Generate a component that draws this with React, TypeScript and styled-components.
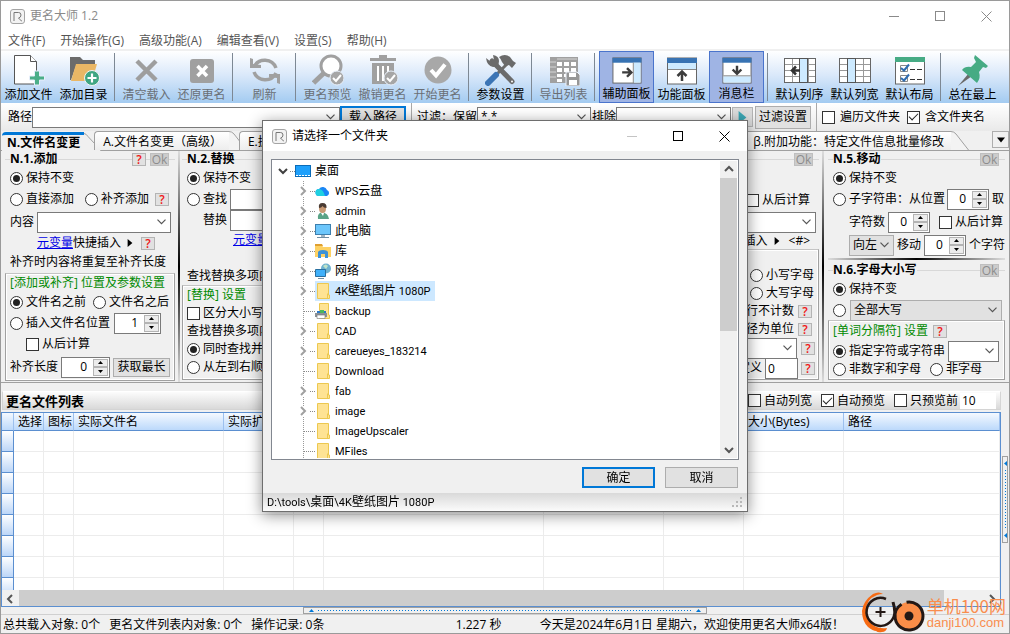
import React from "react";
import styled, { createGlobalStyle, css } from "styled-components";

const Global = createGlobalStyle`
  *, *::before, *::after { box-sizing: border-box; }
  body { margin: 0; background: #f0f0f0; }
  body, button, input, select {
    font-family: "Open Sans", "Noto Sans CJK SC", sans-serif;
    font-size: 12px;
    line-height: 16px;
    color: #000;
  }
  button, input, select { margin: 0; padding: 0; border-radius: 0; outline: none; }
`;

/* ---------- window frame ---------- */

const Window = styled.div`
  position: relative;
  display: flex;
  flex-direction: column;
  height: 100vh;
  min-height: 560px;
  overflow: hidden;
  white-space: nowrap;
  border: 1px solid #9a9a9a;
  background: #f0f0f0;
`;

const TitleBar = styled.header<{ $active?: boolean }>`
  display: flex;
  align-items: center;
  flex: none;
  height: 30px;
  padding-left: 9px;
  background: #fff;
  color: ${(p) => (p.$active ? "#000" : "#8a8a8a")};
`;

const Caption = styled.span`
  flex: 1;
  padding-left: 5px;
`;

const CaptionButton = styled.button<{ $dim?: boolean }>`
  display: grid;
  place-items: center;
  width: 46px;
  height: 28px;
  border: 0;
  background: none;
  color: ${(p) => (p.$dim ? "#c4c4c4" : "inherit")};
`;

const MenuBar = styled.nav`
  display: flex;
  align-items: center;
  gap: 15px;
  flex: none;
  height: 20px;
  padding: 2px 0 0 7px;
  background: #fff;
  border-bottom: 2px solid #f0f0f0;
`;

const MenuItem = styled.button`
  border: 0;
  background: none;
  color: #555;
`;

const ToolBar = styled.div`
  display: flex;
  flex: none;
  height: 52px;
  background: linear-gradient(#fff, #dbe9fa 45%, #a3cbf1);
`;

const ToolButton = styled.button<{ $on?: boolean }>`
  display: flex;
  flex-direction: column;
  align-items: center;
  flex: none;
  width: 55px;
  padding-top: ${(p) => (p.$on ? 2 : 3)}px;
  border: 0;
  background: none;
  ${(p) =>
    p.$on &&
    css`
      border: 1px solid #4a74cc;
      background: #9fb4e4;
    `}
  &:disabled {
    color: #6a6f76;
  }
  span {
    padding-top: 1px;
  }
`;

const ToolSeparator = styled.div`
  flex: none;
  width: 1px;
  margin: 2px 4px 2px 3px;
  background: #7d8894;
`;

/* ---------- small controls ---------- */

const Check = styled.input.attrs({ type: "checkbox" })`
  appearance: none;
  display: grid;
  place-items: center;
  flex: none;
  width: 13px;
  height: 13px;
  border: 1px solid #333;
  background: #fff;
  &:checked::after {
    content: "";
    width: 9px;
    height: 5px;
    margin-bottom: 3px;
    border: solid #222;
    border-width: 0 0 1px 1px;
    transform: rotate(-45deg);
  }
`;

const Radio = styled.input.attrs({ type: "radio" })`
  appearance: none;
  display: grid;
  place-items: center;
  flex: none;
  width: 13px;
  height: 13px;
  border: 1px solid #333;
  border-radius: 50%;
  background: #fff;
  &:checked::after {
    content: "";
    width: 7px;
    height: 7px;
    border-radius: 50%;
    background: #222;
  }
`;

const Option = styled.label<{ $ml?: number; $gap?: number }>`
  display: flex;
  align-items: center;
  gap: ${(p) => p.$gap ?? 3}px;
  margin-left: ${(p) => p.$ml ?? 0}px;
`;

const Field = styled.label<{ $ml?: number }>`
  display: flex;
  align-items: center;
  gap: 3px;
  margin-left: ${(p) => p.$ml ?? 0}px;
`;

const TextBox = styled.input<{ $w?: number; $plain?: boolean }>`
  ${(p) => (p.$w ? `width: ${p.$w}px;` : "flex: 1; min-width: 0;")}
  height: ${(p) => (p.$plain ? 16 : 21)}px;
  padding: 0 2px;
  border: ${(p) => (p.$plain ? 0 : "1px solid #7a7a7a")};
  background: #fff;
`;

const ComboFrame = styled.span<{ $w?: number; $grey?: boolean }>`
  position: relative;
  display: flex;
  align-items: center;
  ${(p) => (p.$w ? `width: ${p.$w}px;` : "flex: 1; min-width: 0;")}
  height: 21px;
  border: 1px solid ${(p) => (p.$grey ? "#adadad" : "#7a7a7a")};
  background: ${(p) => (p.$grey ? "#e1e1e1" : "#fff")};
  select {
    appearance: none;
    width: 100%;
    height: 19px;
    padding-left: 3px;
    border: 0;
    background: none;
  }
  svg {
    position: absolute;
    right: 4px;
    pointer-events: none;
  }
`;

const SpinFrame = styled.span<{ $w: number }>`
  display: flex;
  width: ${(p) => p.$w}px;
  height: 21px;
  padding: 1px;
  border: 1px solid #7a7a7a;
  background: #fff;
  input {
    flex: 1;
    min-width: 0;
    padding-right: 6px;
    border: 0;
    background: none;
    text-align: right;
  }
`;

const SpinButtons = styled.span`
  display: flex;
  flex-direction: column;
  width: 15px;
  button {
    display: grid;
    place-items: center;
    flex: 1;
    min-height: 0;
    border: 1px solid #b4b4b4;
    background: #ececec;
  }
`;

const Button = styled.button<{ $w: number; $primary?: boolean; $h?: number }>`
  flex: none;
  width: ${(p) => p.$w}px;
  height: ${(p) => p.$h ?? 21}px;
  border: ${(p) => (p.$primary ? "2px solid #0078d7" : "1px solid #adadad")};
  background: #e1e1e1;
`;

const HelpButton = styled.button<{ $ml?: number }>`
  flex: none;
  width: 14px;
  height: 13px;
  margin-left: ${(p) => p.$ml ?? 0}px;
  border: 1px solid #b4b4b4;
  background: #e1e1e1;
  color: #f01818;
  font-weight: 600;
  line-height: 11px;
`;

const OkButton = styled.button`
  flex: none;
  width: 19px;
  height: 13px;
  border: 1px solid #bfbfbf;
  background: #ccc;
  color: #8c8c8c !important;
  line-height: 11px;
`;

const VarLink = styled.a`
  color: #0000e6;
`;

/* ---------- path / filter row ---------- */

const PathBar = styled.div`
  display: flex;
  align-items: center;
  flex: none;
  height: 28px;
  padding: 0 24px 0 7px;
  background: linear-gradient(#fff, #e9e9e9);
`;

const PathField = styled.label`
  display: flex;
  align-items: center;
  flex: 1;
  min-width: 0;
`;

const BarSeparator = styled.div`
  width: 1px;
  height: 28px;
  margin: 0 5px;
  background: #a8a8a8;
`;

const PlayButton = styled.button`
  display: grid;
  place-items: center;
  width: 21px;
  height: 20px;
  margin: 0 2px 0 1px;
  border: 1px solid #b4b4b4;
  background: #dcdcdc;
`;

/* ---------- tabs ---------- */

const TabStrip = styled.div`
  display: flex;
  align-items: flex-end;
  flex: none;
  height: 20px;
  padding-left: 1px;
  border-bottom: 1px solid #a0a0a0;
  background: #f0f0f0;
`;

const Tab = styled.button<{ $active?: boolean }>`
  display: flex;
  height: 19px;
  margin-bottom: ${(p) => (p.$active ? -1 : 0)}px;
  margin-right: -8px;
  border: 0;
  background: none;
  font-weight: ${(p) => (p.$active ? 700 : 400)};
  span {
    height: 100%;
    padding: 1px ${(p) => (p.$active ? "4px 0 5px" : "7px 0 8px")};
    border-top: ${(p) => (p.$active ? "3px solid #0078d7" : "1px solid #a0a0a0")};
    border-left: ${(p) => (p.$active ? 0 : "1px solid #a0a0a0")};
    border-top-left-radius: 4px;
    background: ${(p) => (p.$active ? "#f0f0f0" : "linear-gradient(#fff, #ededed)")};
    line-height: ${(p) => (p.$active ? 14 : 18)}px;
  }
`;

const TabSpacer = styled.div`
  flex: 1;
`;

const TabMenuButton = styled.button`
  display: grid;
  place-items: center;
  width: 17px;
  height: 17px;
  margin: 0 0 2px 31px;
  border: 1px solid #adadad;
  background: #f0f0f0;
`;

/* ---------- option panels ---------- */

const Panels = styled.div`
  display: flex;
  flex: none;
  height: 232px;
  border-bottom: 1px solid #a0a0a0;
`;

const Column = styled.section<{ $w: number; $pl?: number; $pr?: number }>`
  display: flex;
  flex-direction: column;
  flex: none;
  width: ${(p) => p.$w}px;
  padding: 0 ${(p) => p.$pr ?? 1}px 2px ${(p) => p.$pl ?? 0}px;
`;

const Middle = styled.div`
  display: flex;
  justify-content: space-between;
  flex: 1;
  min-width: 0;
`;

const VerticalRule = styled.div`
  flex: none;
  width: 2px;
  margin: 0 2px;
  background: linear-gradient(#ddd, #000 50%, #ddd);
`;

const HorizontalRule = styled.div`
  height: 2px;
  margin: 3px 0 2px;
  background: linear-gradient(90deg, #ddd, #000 50%, #ddd);
`;

const GroupHead = styled.div`
  display: flex;
  align-items: center;
  height: 16px;
  h3 {
    margin: 0 1px 0 0;
    font-size: 12px;
    line-height: 16px;
  }
`;

const Line = styled.i<{ $w?: number }>`
  ${(p) => (p.$w ? `width: ${p.$w}px;` : "flex: 1;")}
  height: 1px;
  background: #d8d8d8;
`;

const Row = styled.div<{ $h?: number; $pl?: number; $end?: number }>`
  display: flex;
  align-items: center;
  flex: none;
  height: ${(p) => p.$h ?? 20}px;
  padding-left: ${(p) => p.$pl ?? 5}px;
  ${(p) => p.$end && `justify-content: flex-end; padding-right: ${p.$end}px;`}
`;

const Box = styled.div`
  flex: 1;
  border: 1px solid #a0a0a0;
  border-top-color: #c4c4c4;
  box-shadow: inset 1px 1px #fff, inset -1px -1px #fff;
`;

const Legend = styled.span`
  color: #008a00;
`;

/* ---------- file list ---------- */

const ListBar = styled.div`
  display: flex;
  align-items: center;
  flex: none;
  height: 19px;
  margin: 8px 8px 2px 1px;
  padding: 0 4px 0 3px;
  border: 1px solid #d4d4d4;
  border-top-color: #fff;
  background: linear-gradient(#fcfcfc, #d9d9d9);
  h2 {
    flex: 1;
    margin: 0;
    font-size: 13px;
    line-height: 16px;
  }
`;

const ListArea = styled.div`
  display: flex;
  flex: 1;
  min-height: 80px;
`;

const ListFrame = styled.div`
  display: flex;
  flex-direction: column;
  flex: 1;
  min-width: 0;
  border: 1px solid #5b8fd0;
  background: #fff;
`;

const TableClip = styled.div`
  flex: 1;
  overflow: hidden;
`;

const Table = styled.table`
  width: 100%;
  table-layout: fixed;
  border-collapse: separate;
  border-spacing: 0;
  th {
    height: 18px;
    padding: 0 0 0 4px;
    border-right: 1px solid #9dc0ee;
    border-bottom: 1px solid #5b8fd0;
    background: linear-gradient(#f4f9ff, #bcd9fb);
    font-weight: 400;
    line-height: 16px;
    text-align: left;
    overflow: hidden;
  }
  td {
    height: 21px;
    padding: 0;
    border-right: 1px solid #ececec;
    border-bottom: 1px solid #ececec;
  }
  td:first-child {
    border-right: 1px solid #5b8fd0;
    border-bottom: 1px solid #5b8fd0;
    background: linear-gradient(#fff, #bcd6f8);
  }
`;

const HScroll = styled.div`
  display: flex;
  flex: none;
  height: 16px;
  background: #f0f0f0;
`;

const ScrollArrow = styled.button`
  display: grid;
  place-items: center;
  flex: none;
  width: 17px;
  height: 17px;
  border: 0;
  background: none;
`;

const HThumb = styled.div`
  width: 96%;
  background: #cdcdcd;
`;

const HTrack = styled.div`
  display: flex;
  flex: 1;
`;

const SideSplitter = styled.div`
  display: flex;
  flex-direction: column;
  justify-content: center;
  width: 8px;
  padding: 0 1px 20px;
`;

const SideHandle = styled.div`
  display: flex;
  flex-direction: column;
  align-items: center;
  justify-content: space-between;
  height: 87px;
  padding: 4px 0;
  border: 1px solid #a0a0a0;
`;

const SideDots = styled.i`
  flex: 1;
  width: 1px;
  margin: 4px 0;
  background: repeating-linear-gradient(#0078d7 0 1px, transparent 1px 3px);
`;

const BottomSplitter = styled.div`
  display: flex;
  justify-content: center;
  flex: none;
  height: 7px;
`;

const BottomHandle = styled.div`
  display: flex;
  align-items: center;
  width: 40%;
  padding: 0 5px;
  border: 1px solid #a0a0a0;
`;

const BottomDots = styled.i`
  flex: 1;
  height: 1px;
  margin: 0 4px;
  background: repeating-linear-gradient(90deg, #0078d7 0 1px, transparent 1px 3px);
`;

const StatusBar = styled.footer`
  display: flex;
  align-items: center;
  flex: none;
  height: 19px;
  padding: 2px 0 0 2px;
  border-top: 1px solid #d0d0d0;
`;

const StatusCell = styled.div<{ $w?: string }>`
  display: flex;
  gap: 9px;
  width: ${(p) => p.$w ?? "auto"};
  padding-right: 4px;
`;

/* ---------- site mark over the corner ---------- */

const SiteMark = styled.div`
  position: absolute;
  right: 3px;
  bottom: 0;
  display: flex;
  gap: 1px;
  color: #f98d4e;
  svg {
    overflow: visible;
  }
`;

const SiteName = styled.div`
  padding-top: 4px;
  font-family: "Noto Sans CJK SC", sans-serif;
  font-size: 17px;
  line-height: 22px;
  small {
    display: block;
    font-family: "Liberation Sans", sans-serif;
    font-size: 13px;
    line-height: 12px;
  }
`;

/* ---------- folder dialog ---------- */

const DialogLayer = styled.div`
  position: fixed;
  inset: 0;
  display: flex;
  align-items: center;
  justify-content: center;
  padding-bottom: 2px;
`;

const Dialog = styled.div`
  display: flex;
  flex-direction: column;
  width: 486px;
  border: 1px solid #6e6e6e;
  background: #f0f0f0;
  box-shadow: 0 3px 14px rgba(0, 0, 0, 0.45);
`;

const TreeFrame = styled.div`
  display: flex;
  height: 301px;
  margin: 8px 8px 0;
  padding: 1px;
  border: 1px solid #828790;
  background: #fff;
`;

const TreeList = styled.ul`
  flex: 1;
  margin: 0;
  padding: 0;
  overflow: hidden;
  list-style: none;
`;

const TreeItem = styled.li<{ $depth: number }>`
  display: flex;
  align-items: center;
  height: 20px;
  padding-left: ${(p) => (p.$depth ? 23 : 3)}px;
`;

const Twist = styled.span<{ $open?: boolean }>`
  display: grid;
  place-items: center;
  width: 14px;
  height: 20px;
  background: ${(p) =>
    p.$open
      ? "none"
      : "repeating-linear-gradient(#999 0 1px, transparent 1px 2px) 7px 0 / 1px 20px no-repeat"};
  svg {
    background: #fff;
  }
`;

const Stub = styled.i<{ $leaf?: boolean }>`
  width: ${(p) => (p.$leaf ? 11 : 5)}px;
  height: 1px;
  margin-left: ${(p) => (p.$leaf ? -6 : 0)}px;
  background: repeating-linear-gradient(90deg, #888 0 1px, transparent 1px 2px);
`;

const NodeLabel = styled.span<{ $selected?: boolean }>`
  display: flex;
  align-items: center;
  gap: 4px;
  height: 20px;
  padding-right: 4px;
  background: ${(p) => (p.$selected ? "#cde8ff" : "none")};
`;

const PathText = styled.span`
  white-space: pre;
`;

const Latin = styled.span`
  font-family: Roboto, sans-serif;
  font-size: 11px;
`;

const VScroll = styled.div`
  display: flex;
  flex-direction: column;
  width: 17px;
  background: #f0f0f0;
`;

const VTrack = styled.div`
  flex: 1;
`;

const VThumb = styled.div`
  height: 58%;
  background: #cdcdcd;
`;

const DialogActions = styled.div`
  display: flex;
  justify-content: flex-end;
  gap: 10px;
  padding: 7px 9px 5px;
`;

const DialogStatus = styled.div`
  display: flex;
  align-items: center;
  justify-content: space-between;
  height: 18px;
  padding: 0 4px;
  background: linear-gradient(#d9d9d9, #fbfbfb);
`;

/* ---------- drawings ---------- */

const AppIcon = () => (
  <svg width="15" height="15" viewBox="0 0 15 15" fill="none">
    <rect x=".5" y=".5" width="14" height="14" rx="2.5" fill="#f3f3f3" stroke="#a4a4a4" />
    <path d="M4 12V3.500h4.500q2.500 0 2.500 2.500T8.500 9l3 3H12" stroke="#777" />
  </svg>
);

const MinGlyph = () => (
  <svg width="11" height="11"><path d="M0 5.5h10" stroke="currentColor" /></svg>
);
const MaxGlyph = () => (
  <svg width="11" height="11"><rect x=".5" y=".5" width="9" height="9" fill="none" stroke="currentColor" /></svg>
);
const CloseGlyph = () => (
  <svg width="11" height="11"><path d="M.5.5l10 10M10.500 .5l-10 10" stroke="currentColor" /></svg>
);

const Chevron = () => (
  <svg width="9" height="6" viewBox="0 0 9 6"><path d="M.5.7l4 4 4-4" fill="none" stroke="#555" strokeWidth="1.2" /></svg>
);

const Triangle = ({ dir, color = "#000", size = 5 }: { dir: "up" | "down" | "left" | "right"; color?: string; size?: number }) => {
  const points = { up: "0,8 5,2 10,8", down: "0,2 10,2 5,8", left: "8,0 8,10 2,5", right: "2,0 8,5 2,10" }[dir];
  return (
    <svg width={size} height={size} viewBox="0 0 10 10">
      <polygon points={points} fill={color} />
    </svg>
  );
};

const ArrowGlyph = ({ dir, color = "#555" }: { dir: "up" | "down" | "left" | "right"; color?: string }) => {
  const d = { up: "M1 6l4-4 4 4", down: "M1 3l4 4 4-4", left: "M6 1L2 5l4 4", right: "M3 1l4 4-4 4" }[dir];
  return (
    <svg width="10" height="10"><path d={d} fill="none" stroke={color} strokeWidth="2" /></svg>
  );
};

const TabEnd = ({ active }: { active?: boolean }) => (
  <svg width="18" height="19" viewBox="0 0 18 19">
    <path d={active ? "M0 3l17 16H0z" : "M0 0q3 0 5 3l12 16H0z"} fill={active ? "#f0f0f0" : "#f3f3f3"} />
    <path d={active ? "M0 1.500q2 0 4 3L17.500 19" : "M0 .5q3 0 5 2.500L17.500 19"} fill="none" stroke="#a0a0a0" />
  </svg>
);

const Grip = () => (
  <svg width="12" height="12" fill="#b8b8b8">
    <path d="M9 1h2v2H9zM5 5h2v2H5zM9 5h2v2H9zM1 9h2v2H1zM5 9h2v2H5zM9 9h2v2H9z" />
  </svg>
);

const I = ({ children }: { children: React.ReactNode }) => (
  <svg width="32" height="32" viewBox="0 0 32 32" fill="none">{children}</svg>
);

const OkBadge = ({ x, y }: { x: number; y: number }) => (
  <g>
    <circle cx={x} cy={y} r="7" fill="#a6a6a6" stroke="#e8f0fa" />
    <path d={`M${x - 4} ${y}l3 3 5-6`} stroke="#fff" strokeWidth="2" />
  </g>
);

const AddFileIcon = () => (
  <I>
    <path d="M1.500 1.500h16l6 6V30h-22z" fill="#fff" stroke="#555" />
    <path d="M17.500 1.500v6h6" fill="#fff" stroke="#555" />
    <path d="M21.500 17h5v5h5v4h-5v5h-5v-5h-5v-4h5z" fill="#4bae88" stroke="#e6eefa" />
  </I>
);
const AddFolderIcon = () => (
  <I>
    <path d="M2 3h10l3 3h12v6H8L3 26H2z" fill="#6b6b6b" />
    <path d="M8 10h21l-5 17H3z" fill="#eab765" />
    <circle cx="24" cy="24" r="7.500" fill="#3fa682" stroke="#f5f5f5" />
    <path d="M24 19.500v9M19.500 24h9" stroke="#fff" strokeWidth="2.200" />
  </I>
);
const ClearIcon = () => (
  <I><path d="M6 7l19 19M25 7L6 26" stroke="#9e9e9e" strokeWidth="4.500" /></I>
);
const RestoreIcon = () => (
  <I>
    <rect x="4" y="5" width="24" height="24" rx="3" fill="#a0a0a0" />
    <path d="M11.500 12l9.500 10M21 12l-9.500 10" stroke="#fff" strokeWidth="3.500" />
  </I>
);
const RefreshIcon = () => (
  <I>
    <path d="M5 13a12 12 0 0 1 22 1M27 19a12 12 0 0 1-22-1" stroke="#a0a0a0" strokeWidth="3.500" />
    <path d="M1 4l3 1v5l8 1v3H1zM31 30l-3-1v-5l-8-1v-3h11z" fill="#a0a0a0" />
  </I>
);
const PreviewIcon = () => (
  <I>
    <circle cx="19" cy="12" r="10" fill="#fff" stroke="#a0a0a0" strokeWidth="3" />
    <path d="M12 19L1.500 29" stroke="#a0a0a0" strokeWidth="5" />
    <OkBadge x={25} y={24} />
  </I>
);
const TrashIcon = () => (
  <I>
    <path d="M3 4h9V1h8v3h9v3H3zM5 9h22v21H5z" fill="#a0a0a0" />
    <path d="M11 12v15M16 12v15M21 12v15" stroke="#fff" strokeWidth="2" />
    <OkBadge x={24} y={24} />
  </I>
);
const StartIcon = () => (
  <I>
    <circle cx="16" cy="16" r="13.500" fill="#a8a8a8" />
    <path d="M9 16l5 5.500 9-11" stroke="#fff" strokeWidth="4" />
  </I>
);
const SettingsIcon = () => (
  <I>
    <path d="M7 7l20 20.500" stroke="#6b6b6b" strokeWidth="5" strokeLinecap="round" />
    <path d="M1 4l5 4 3-2-1-5q6 1 6 6 0 6-6 6-6-1-7-9z" fill="#6b6b6b" />
    <path d="M23 9L12 20" stroke="#6b6b6b" strokeWidth="3" />
    <path d="M14 3q6-4 11 0l3 4 3 2-4 5-3-3-4 1-3-4q-1-3-3-5z" fill="#6b6b6b" />
    <path d="M11 21l-8 8" stroke="#3b74b5" strokeWidth="6" strokeLinecap="round" />
    <circle cx="27" cy="27.500" r="1" fill="#fff" />
  </I>
);
const ExportIcon = () => (
  <I>
    <rect x="2" y="3" width="28" height="26" fill="#a0a0a0" />
    <path
      d="M9 8h5v4H9zM16 8h5v4h-5zM23 8h5v4h-5zM9 14h5v4H9zM16 14h5v4h-5zM23 14h5v4h-5zM9 20h5v3H9zM16 20h5v3h-5zM9 25h5v3H9z"
      fill="#fff"
    />
    <path d="M2 8h6M2 13h6M2 18h6M2 23h6M9 5h20" stroke="#d5d5d5" />
    <path d="M18 18h11l3 3v11H18z" fill="#969696" stroke="#eef3fb" />
    <path d="M21 19h7v4h-7zM21 26h8v5h-8z" fill="#fff" />
  </I>
);

const PaneIcon = ({ side }: { side: "right" | "top" | "bottom" }) => (
  <I>
    <rect x="1.500" y="4" width="29" height="26" fill="#fff" stroke="#666" />
    <rect x="1" y="4" width="30" height="5" fill="#3873b3" />
    {side === "right" && <path d="M23 9h7v20.500h-7z" fill="#cdeaff" />}
    {side === "top" && <path d="M2 9h28v6H2z" fill="#cdeaff" />}
    {side === "bottom" && <path d="M2 23h28v6.500H2z" fill="#cdeaff" />}
    {side === "right" && <path d="M22.500 9v21" stroke="#888" />}
    {side === "top" && <path d="M2 15.500h28" stroke="#888" />}
    {side === "bottom" && <path d="M2 22.500h28" stroke="#888" />}
    <g stroke="#3c3c3c" strokeWidth="2.500">
      {side === "right" && <path d="M11 19h9M16 14.500l4.500 4.500-4.500 4.500" />}
      {side === "top" && <path d="M16 27v-9M11.500 22l4.500-4.500 4.500 4.500" />}
      {side === "bottom" && <path d="M16 12v8M11.500 16l4.500 4.500 4.500-4.500" />}
    </g>
  </I>
);

const GridIcon = ({ col, arrow }: { col: number; arrow?: boolean }) => (
  <I>
    <rect x=".5" y="4.500" width="31" height="24" fill="#fff" stroke="#666" />
    <path d="M1 10.500h30M1 16.500h30M1 22.500h30M8.500 5v23M16.500 5v23M24.500 5v23" stroke="#999" />
    <rect x={col + 0.5} y="4.500" width="8" height="24" fill="#cdeaff" stroke="#555" />
    {arrow && <path d="M16 16.500H9M12 12.500l-4 4 4 4" stroke="#333" strokeWidth="2.500" />}
  </I>
);

const LayoutIcon = () => (
  <I>
    <rect x="1.500" y="4" width="29" height="26" fill="#fff" stroke="#666" />
    <rect x="1" y="3" width="30" height="5" fill="#46ab84" />
    <path d="M6.500 11.500h7v6h-7zM6.500 21.500h7v6h-7z" stroke="#888" />
    <path d="M7 14l3 2.500 5-6M7 24l3 2.500 5-6" stroke="#2f6cb0" strokeWidth="2" />
    <path d="M16 15.500h5M23 15.500h5M16 25.500h5M23 25.500h5" stroke="#333" />
  </I>
);
const PinIcon = () => (
  <I>
    <path d="M12 19l3 3L1 32z" fill="#6b6b6b" />
    <path d="M18 1l13 11-2 2-3-1-4 5q2 6-2 11L5 16q3-4 9-3l5-5-2-4z" fill="#46ab84" />
  </I>
);

const FolderGlyph = () => (
  <svg width="16" height="16" viewBox="0 0 16 16">
    <path d="M2.500.5h11V12h1v3.500h-12z" fill="#fee394" stroke="#ecc850" />
    <path d="M12.500 10.500v5" stroke="#ecc850" />
  </svg>
);
const DesktopGlyph = () => (
  <svg width="16" height="14" viewBox="0 0 16 14">
    <rect x=".5" y="1.500" width="15" height="11" fill="#1ea0fb" stroke="#0b6cb8" />
    <path d="M1 11.500h14" stroke="#fff" strokeDasharray="2 1" />
  </svg>
);
const CloudGlyph = () => (
  <svg width="16" height="16" viewBox="0 0 16 16">
    <path d="M4 13a3.500 3.500 0 0 1 0-7 4.500 4.500 0 0 1 8 1 3.200 3.200 0 0 1 0 6z" fill="#1a86f5" />
    <path d="M4 13a3.500 3.500 0 0 1 0-7q4 0 6 7z" fill="#1fd0e0" />
  </svg>
);
const UserGlyph = () => (
  <svg width="16" height="16" viewBox="0 0 16 16">
    <path d="M3 16q-1-6 4-6.500 6 0 7 6.500z" fill="#5aa386" />
    <ellipse cx="7.500" cy="5.500" rx="3.500" ry="4.500" fill="#c99a74" />
    <path d="M4 5q-1-5 3.500-5t4 5q-3 0-4-2-1 2-3.500 2z" fill="#4a3b33" />
    <path d="M6 10l2 3 1-3z" fill="#fff" />
  </svg>
);
const ComputerGlyph = () => (
  <svg width="16" height="16" viewBox="0 0 16 16">
    <rect x=".5" y="1.500" width="15" height="10" fill="#6cc6fb" stroke="#3d7fae" />
    <path d="M6 12h4v2H6z" fill="#9fb4c2" />
    <path d="M2 14.500h12" stroke="#6f8da3" />
  </svg>
);
const LibraryGlyph = () => (
  <svg width="16" height="16" viewBox="0 0 16 16">
    <path d="M0 2h7l1 2h8v10H0z" fill="#fdd163" />
    <path d="M0 1h7l1 2H0z" fill="#e0a030" />
    <path d="M3 15V9.500Q3 7 8 7t5 2.500V15h-3v-4H6v4z" fill="#3d92d6" />
  </svg>
);
const NetworkGlyph = () => (
  <svg width="16" height="16" viewBox="0 0 16 16">
    <circle cx="11" cy="5.500" r="5" fill="#6fb2cf" />
    <path d="M8 3q3-3 5 0l-2 3z" fill="#bfe3c8" />
    <path d="M.5 6.500h10v7H.5z" fill="#3fb0fa" stroke="#2a6f9f" />
    <path d="M3 15.500h6" stroke="#6f8da3" />
  </svg>
);
const BackupGlyph = () => (
  <svg width="16" height="16" viewBox="0 0 16 16">
    <path d="M4.500.5h9V12h1v3.500h-10z" fill="#fee394" stroke="#ecc850" />
    <path d="M2 8h9v3H2z" fill="#2b7ac9" />
    <path d="M5 7h4v3H5z" fill="#4db85a" />
    <path d="M0 10h12v4H0z" fill="#8b9196" />
    <path d="M2 12h8v3.500H2z" fill="#fff" stroke="#777" strokeWidth=".6" />
  </svg>
);

const SiteLogo = () => (
  <svg width="64" height="42" viewBox="0 0 64 42" fill="none">
    <path d="M21 3Q17 0 11 3 1 10 0 20 0 30 6 36q5 4 8 4 2 2 6 1 4 0 5-4-8 1-14-3-7-6-7-14Q4 8 15 4q3-1 6-1z" fill="#f76b14" />
    <path d="M24 8A14 14 0 1 0 32 17" stroke="#231815" strokeWidth="2.500" />
    <path d="M18.500 16v10M13.500 21h10" stroke="#231815" strokeWidth="2" />
    <path d="M31 11q2 9 4 15" stroke="#231815" strokeWidth="3" />
    <circle cx="47" cy="25" r="14" fill="#fa8d48" stroke="#231815" strokeWidth="3" strokeDasharray="82 6" transform="rotate(-100 47 25)" />
    <circle cx="47" cy="25" r="4.500" fill="#231815" />
  </svg>
);

/* ---------- composed controls ---------- */

const Combo = ({ w, grey, value = "", label }: { w?: number; grey?: boolean; value?: string; label: string }) => (
  <ComboFrame $w={w} $grey={grey}>
    <select aria-label={label} defaultValue={value}>
      <option value={value}>{value}</option>
    </select>
    <Chevron />
  </ComboFrame>
);

const Spin = ({ w, value, label }: { w: number; value: string; label: string }) => (
  <SpinFrame $w={w}>
    <input defaultValue={value} aria-label={label} />
    <SpinButtons>
      <button aria-label="增加"><Triangle dir="up" /></button>
      <button aria-label="减少"><Triangle dir="down" /></button>
    </SpinButtons>
  </SpinFrame>
);

const Choice = ({ name, text, on, ml }: { name: string; text: string; on?: boolean; ml?: number }) => (
  <Option $ml={ml}>
    <Radio name={name} defaultChecked={on} />
    {text}
  </Option>
);

const Tick = ({ text, on, ml, gap }: { text: string; on?: boolean; ml?: number; gap?: number }) => (
  <Option $ml={ml} $gap={gap}>
    <Check defaultChecked={on} />
    {text}
  </Option>
);

const Head = ({ title, help }: { title?: string; help?: boolean }) => (
  <GroupHead>
    <Line $w={5} />
    {title && <h3>{title}</h3>}
    <Line />
    {help && <HelpButton>?</HelpButton>}
    {help && <Line $w={4} />}
    <OkButton disabled>Ok</OkButton>
    <Line $w={6} />
  </GroupHead>
);

/* File names are set in a narrower face than the Chinese text around them. */
const FileText = ({ text }: { text: string }) => (
  <PathText>
    {text.split(/([\u4e00-\u9fff]+)/).map((part, i) => (i % 2 ? part : part && <Latin key={i}>{part}</Latin>))}
  </PathText>
);

type Tool = { text: string; icon: React.ReactNode; off?: boolean; on?: boolean };

const tools: Tool[][] = [
  [
    { text: "添加文件", icon: <AddFileIcon /> },
    { text: "添加目录", icon: <AddFolderIcon /> },
  ],
  [
    { text: "清空载入", icon: <ClearIcon />, off: true },
    { text: "还原更名", icon: <RestoreIcon />, off: true },
  ],
  [{ text: "刷新", icon: <RefreshIcon />, off: true }],
  [
    { text: "更名预览", icon: <PreviewIcon />, off: true },
    { text: "撤销更名", icon: <TrashIcon />, off: true },
    { text: "开始更名", icon: <StartIcon />, off: true },
  ],
  [{ text: "参数设置", icon: <SettingsIcon /> }],
  [{ text: "导出列表", icon: <ExportIcon />, off: true }],
  [
    { text: "辅助面板", icon: <PaneIcon side="right" />, on: true },
    { text: "功能面板", icon: <PaneIcon side="top" /> },
    { text: "消息栏", icon: <PaneIcon side="bottom" />, on: true },
  ],
  [
    { text: "默认列序", icon: <GridIcon col={15} arrow /> },
    { text: "默认列宽", icon: <GridIcon col={8} /> },
    { text: "默认布局", icon: <LayoutIcon /> },
  ],
  [{ text: "总在最上", icon: <PinIcon /> }],
];

const menus = ["文件(F)", "开始操作(G)", "高级功能(A)", "编辑查看(V)", "设置(S)", "帮助(H)"];

const columns: { title: string; w?: number }[] = [
  { title: "", w: 12 },
  { title: "选择", w: 30 },
  { title: "图标", w: 30 },
  { title: "实际文件名", w: 150 },
  { title: "实际扩展名", w: 70 },
  { title: "", w: 30 },
  { title: "", w: 220 },
  { title: "", w: 120 },
  { title: "", w: 80 },
  { title: "大小(Bytes)", w: 100 },
  { title: "路径" },
];

type Node = { text: string; icon: React.ReactNode; leaf?: boolean; selected?: boolean };

const nodes: Node[] = [
  { text: "WPS云盘", icon: <CloudGlyph /> },
  { text: "admin", icon: <UserGlyph /> },
  { text: "此电脑", icon: <ComputerGlyph /> },
  { text: "库", icon: <LibraryGlyph /> },
  { text: "网络", icon: <NetworkGlyph /> },
  { text: "4K壁纸图片 1080P", icon: <FolderGlyph />, selected: true },
  { text: "backup", icon: <BackupGlyph />, leaf: true },
  { text: "CAD", icon: <FolderGlyph /> },
  { text: "careueyes_183214", icon: <FolderGlyph /> },
  { text: "Download", icon: <FolderGlyph />, leaf: true },
  { text: "fab", icon: <FolderGlyph /> },
  { text: "image", icon: <FolderGlyph /> },
  { text: "ImageUpscaler", icon: <FolderGlyph />, leaf: true },
  { text: "MFiles", icon: <FolderGlyph />, leaf: true },
];

const AddPanel = () => (
  <Column $w={175} $pl={4}>
    <Head title="N.1.添加" help />
    <Row $h={22}><Choice name="add" text="保持不变" on /></Row>
    <Row>
      <Choice name="add" text="直接添加" />
      <Choice name="add" text="补齐添加" ml={11} />
      <HelpButton $ml={6}>?</HelpButton>
    </Row>
    <Row $h={26}>
      <Field>内容<Combo w={134} label="内容" /></Field>
    </Row>
    <Row $h={16} $pl={32}>
      <VarLink href="#var">元变量</VarLink>快捷插入
      <Field $ml={5}><Triangle dir="right" size={8} /></Field>
      <HelpButton $ml={7}>?</HelpButton>
    </Row>
    <Row $h={22}>补齐时内容将重复至补齐长度</Row>
    <Box>
      <Row $h={18} $pl={4}><Legend>[添加或补齐] 位置及参数设置</Legend></Row>
      <Row $pl={4}>
        <Choice name="pos" text="文件名之前" on />
        <Choice name="pos" text="文件名之后" ml={7} />
      </Row>
      <Row $h={22} $pl={4}>
        <Choice name="pos" text="插入文件名位置" />
        <Field $ml={4}><Spin w={47} value="1" label="插入文件名位置" /></Field>
      </Row>
      <Row $pl={20}><Tick text="从后计算" /></Row>
      <Row $h={26} $pl={4}>
        <Field>补齐长度<Spin w={49} value="0" label="补齐长度" /></Field>
        <Field $ml={3} as="div"><Button $w={57} $h={19}>获取最长</Button></Field>
      </Row>
    </Box>
  </Column>
);

const ReplacePanel = () => (
  <Column $w={190}>
    <Head title="N.2.替换" />
    <Row $h={22}><Choice name="rep" text="保持不变" on /></Row>
    <Row>
      <Choice name="rep" text="查找" />
      <Field $ml={3}><TextBox $w={130} aria-label="查找" /></Field>
    </Row>
    <Row $h={22} $pl={21}><Field>替换<TextBox $w={130} /></Field></Row>
    <Row $h={18} $pl={51}><VarLink href="#var">元变量</VarLink></Row>
    <Row $h={18} />
    <Row $h={18}>查找替换多项内容</Row>
    <Box>
      <Row $h={18} $pl={4}><Legend>[替换] 设置</Legend></Row>
      <Row $h={18} $pl={4}><Tick text="区分大小写" /></Row>
      <Row $h={18} $pl={4}>查找替换多项内容</Row>
      <Row $h={18} $pl={4}><Choice name="order" text="同时查找并替换" on /></Row>
      <Row $h={18} $pl={4}><Choice name="order" text="从左到右顺序" /></Row>
    </Box>
  </Column>
);

const NumberPanel = () => (
  <Column $w={190}>
    <Head />
    <Row $h={22} />
    <Row $h={22} $end={9}><Tick text="从后计算" /></Row>
    <Row $h={22} $end={3}><Combo w={130} label="编号" /></Row>
    <Row $h={16} $end={9}>
      插入
      <Field $ml={5}><Triangle dir="right" size={8} /></Field>
      <Field $ml={8}>&lt;#&gt;</Field>
    </Row>
    <Box>
      <Row $h={16} />
      <Row $h={18} $end={4}><Choice name="case" text="小写字母" /></Row>
      <Row $h={18} $end={4}><Choice name="case" text="大写字母" /></Row>
      <Row $h={18} $end={6}>行不计数<HelpButton $ml={4}>?</HelpButton></Row>
      <Row $h={18} $end={6}>径为单位<HelpButton $ml={4}>?</HelpButton></Row>
      <Row $end={3}><Combo w={90} label="单位" /><HelpButton $ml={4}>?</HelpButton></Row>
      <Row $end={3}>
        <Field>定义<TextBox $w={33} defaultValue="0" /></Field>
        <HelpButton $ml={3}>?</HelpButton>
      </Row>
    </Box>
  </Column>
);

const MovePanel = () => (
  <Column $w={183} $pl={2} $pr={4}>
    <Head title="N.5.移动" />
    <Row $h={22}><Choice name="move" text="保持不变" on /></Row>
    <Row>
      <Choice name="move" text="子字符串：从位置" />
      <Field $ml={2}><Spin w={42} value="0" label="从位置" />取</Field>
    </Row>
    <Row $h={26} $pl={21}>
      <Field>字符数<Spin w={42} value="0" label="字符数" /></Field>
      <Tick text="从后计算" ml={9} />
    </Row>
    <Row $pl={21}>
      <Combo w={47} grey value="向左" label="方向" />
      <Field $ml={3}>移动<Spin w={42} value="0" label="移动" />个字符</Field>
    </Row>
    <HorizontalRule />
    <Head title="N.6.字母大小写" />
    <Row $h={22}><Choice name="letter" text="保持不变" on /></Row>
    <Row>
      <Choice name="letter" text="" />
      <Field $ml={4}><Combo w={152} grey value="全部大写" label="大小写" /></Field>
    </Row>
    <Box>
      <Row $pl={4}><Legend>[单词分隔符] 设置</Legend><HelpButton $ml={5}>?</HelpButton></Row>
      <Row $pl={4}>
        <Choice name="sep" text="指定字符或字符串" on />
        <Field $ml={3}><Combo w={51} label="分隔符" /></Field>
      </Row>
      <Row $h={16} $pl={4}>
        <Choice name="sep" text="非数字和字母" />
        <Choice name="sep" text="非字母" ml={9} />
      </Row>
    </Box>
  </Column>
);

const FolderDialog = () => (
  <DialogLayer>
    <Dialog role="dialog" aria-label="请选择一个文件夹">
      <TitleBar $active>
        <AppIcon />
        <Caption>请选择一个文件夹</Caption>
        <CaptionButton $dim aria-label="最小化"><MinGlyph /></CaptionButton>
        <CaptionButton aria-label="最大化"><MaxGlyph /></CaptionButton>
        <CaptionButton aria-label="关闭"><CloseGlyph /></CaptionButton>
      </TitleBar>
      <TreeFrame>
        <TreeList>
          <TreeItem $depth={0}>
            <Twist $open><ArrowGlyph dir="down" color="#404040" /></Twist>
            <Stub />
            <NodeLabel><DesktopGlyph />桌面</NodeLabel>
          </TreeItem>
          {nodes.map((n) => (
            <TreeItem key={n.text} $depth={1}>
              <Twist>{!n.leaf && <ArrowGlyph dir="right" color="#a0a0a0" />}</Twist>
              <Stub $leaf={n.leaf} />
              <NodeLabel $selected={n.selected}>{n.icon}<FileText text={n.text} /></NodeLabel>
            </TreeItem>
          ))}
        </TreeList>
        <VScroll>
          <ScrollArrow aria-label="向上"><ArrowGlyph dir="up" /></ScrollArrow>
          <VTrack><VThumb /></VTrack>
          <ScrollArrow aria-label="向下"><ArrowGlyph dir="down" /></ScrollArrow>
        </VScroll>
      </TreeFrame>
      <DialogActions>
        <Button $w={73} $primary>确定</Button>
        <Button $w={73}>取消</Button>
      </DialogActions>
      <DialogStatus><FileText text={"D:\\tools\\桌面\\4K壁纸图片 1080P"} /><Grip /></DialogStatus>
    </Dialog>
  </DialogLayer>
);

export default function App() {
  return (
    <Window>
      <Global />
      <TitleBar>
        <AppIcon />
        <Caption>更名大师 1.2</Caption>
        <CaptionButton aria-label="最小化"><MinGlyph /></CaptionButton>
        <CaptionButton aria-label="最大化"><MaxGlyph /></CaptionButton>
        <CaptionButton aria-label="关闭"><CloseGlyph /></CaptionButton>
      </TitleBar>
      <MenuBar>
        {menus.map((m) => <MenuItem key={m}>{m}</MenuItem>)}
      </MenuBar>
      <ToolBar>
        {tools.map((group, i) => (
          <React.Fragment key={group[0].text}>
            {i > 0 && <ToolSeparator />}
            {group.map((t) => (
              <ToolButton key={t.text} disabled={t.off} $on={t.on}>
                {t.icon}
                <span>{t.text}</span>
              </ToolButton>
            ))}
          </React.Fragment>
        ))}
      </ToolBar>
      <PathBar>
        <PathField>路径<Combo label="路径" /></PathField>
        <Button $w={66} $h={23} $primary>载入路径</Button>
        <BarSeparator />
        <Field>过滤：保留</Field>
        <Combo w={114} value="*.*" label="保留" />
        <Field $ml={1}>排除</Field>
        <Combo w={115} label="排除" />
        <PlayButton aria-label="应用过滤"><Triangle dir="right" color="#3aa6b4" size={13} /></PlayButton>
        <Button $w={56} $h={23}>过滤设置</Button>
        <BarSeparator />
        <Tick text="遍历文件夹" gap={5} />
        <Tick text="含文件夹名" on ml={7} gap={5} />
      </PathBar>
      <TabStrip>
        <Tab $active><span>N.文件名变更</span><TabEnd active /></Tab>
        <Tab><span>A.文件名变更（高级）</span><TabEnd /></Tab>
        <Tab><span>E.扩</span><TabEnd /></Tab>
        <TabSpacer />
        <Tab><span>β.附加功能：特定文件信息批量修改</span><TabEnd /></Tab>
        <TabMenuButton aria-label="更多标签"><Triangle dir="down" size={8} /></TabMenuButton>
      </TabStrip>
      <Panels>
        <AddPanel />
        <VerticalRule />
        <Middle>
          <ReplacePanel />
          <NumberPanel />
        </Middle>
        <VerticalRule />
        <MovePanel />
      </Panels>
      <ListBar>
        <h2>更名文件列表</h2>
        <Tick text="自动列宽" />
        <Tick text="自动预览" on ml={9} />
        <Tick text="只预览前" ml={9} />
        <Field $ml={2}><TextBox $w={36} $plain defaultValue="10" aria-label="预览行数" /></Field>
      </ListBar>
      <ListArea>
        <ListFrame>
          <TableClip>
            <Table>
              <colgroup>
                {columns.map((c, i) => <col key={i} width={c.w} />)}
              </colgroup>
              <thead>
                <tr>{columns.map((c, i) => <th key={i}>{c.title}</th>)}</tr>
              </thead>
              <tbody>
                {Array.from({ length: 8 }, (_, r) => (
                  <tr key={r}>{columns.map((_c, i) => <td key={i} />)}</tr>
                ))}
              </tbody>
            </Table>
          </TableClip>
          <HScroll>
            <ScrollArrow aria-label="向左"><ArrowGlyph dir="left" /></ScrollArrow>
            <HTrack><HThumb /></HTrack>
            <ScrollArrow aria-label="向右"><ArrowGlyph dir="right" /></ScrollArrow>
          </HScroll>
        </ListFrame>
        <SideSplitter>
          <SideHandle>
            <Triangle dir="left" color="#0078d7" />
            <SideDots />
            <Triangle dir="left" color="#0078d7" />
          </SideHandle>
        </SideSplitter>
      </ListArea>
      <BottomSplitter>
        <BottomHandle>
          <Triangle dir="up" color="#0078d7" />
          <BottomDots />
          <Triangle dir="up" color="#0078d7" />
        </BottomHandle>
      </BottomSplitter>
      <StatusBar>
        <StatusCell $w="45%">
          <span>总共载入对象: 0个</span>
          <span>更名文件列表内对象: 0个</span>
          <span>操作记录: 0条</span>
        </StatusCell>
        <StatusCell $w="84px">1.227 秒</StatusCell>
        <StatusCell>今天是2024年6月1日 星期六，欢迎使用更名大师x64版！</StatusCell>
      </StatusBar>
      <SiteMark>
        <SiteLogo />
        <SiteName>
          单机100网
          <small>danji100.com</small>
        </SiteName>
      </SiteMark>
      <FolderDialog />
    </Window>
  );
}
